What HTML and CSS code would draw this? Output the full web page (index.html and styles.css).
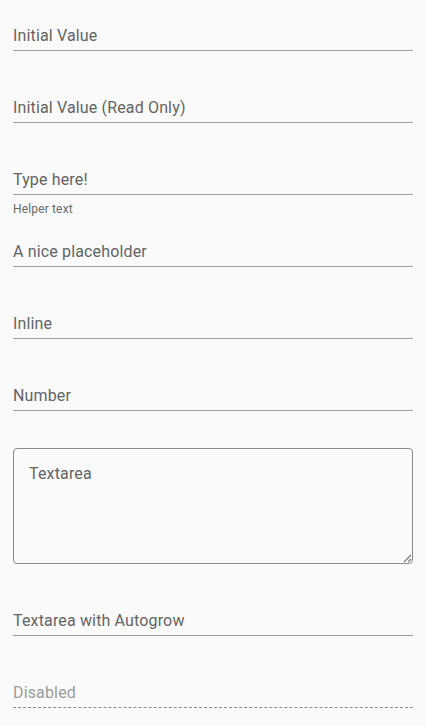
FILE: index.html
```html
<!DOCTYPE html>
<html>
<head>
<meta charset="utf-8">
<link rel="stylesheet" href="styles.css">
</head>
<body>
<div class="page">
  <div class="field"><div class="input">Initial Value</div></div>
  <div class="field"><div class="input">Initial Value (Read Only)</div></div>
  <div class="field"><div class="input">Type here!</div><div class="helper">Helper text</div></div>
  <div class="field"><div class="input">A nice placeholder</div></div>
  <div class="field"><div class="input">Inline</div></div>
  <div class="field"><div class="input">Number</div></div>
  <div class="area-field">
    <div class="area">Textarea
      <svg class="grip" width="10" height="10" viewBox="0 0 10 10"><path d="M9 2 L2 9 M9 6 L6 9" stroke="#777" stroke-width="1.2" fill="none"/></svg>
    </div>
  </div>
  <div class="field"><div class="input">Textarea with Autogrow</div></div>
  <div class="field"><div class="input disabled">Disabled</div></div>
</div>
</body>
</html>
```
FILE: styles.css
```css
html, body {
  margin: 0;
  padding: 0;
  background: #fafafa;
}
body {
  font-family: Roboto, "Noto Sans", sans-serif;
  color: #646464;
  letter-spacing: 0.15px;
}
.page {
  padding: 0 13px;
}
.field {
  height: 72px;
  box-sizing: border-box;
  padding-top: 26px;
}
.input {
  font-size: 16px;
  line-height: 20px;
  padding-bottom: 4px;
  border-bottom: 1px solid #9e9e9e;
}
.input.disabled {
  color: #9a9a9a;
  border-bottom: 1px dashed #8a8a8a;
}
.helper {
  font-size: 12px;
  line-height: 16px;
  margin-top: 6px;
  color: #6a6a6a;
}
.area-field {
  padding: 16px 0 21px;
}
.area {
  position: relative;
  border: 1px solid #8c8c8c;
  border-radius: 4px;
  padding: 15px 15px;
  box-sizing: border-box;
  height: 116px;
  font-size: 16px;
  line-height: 20px;
}
.grip {
  position: absolute;
  right: 0;
  bottom: 0;
}
```
